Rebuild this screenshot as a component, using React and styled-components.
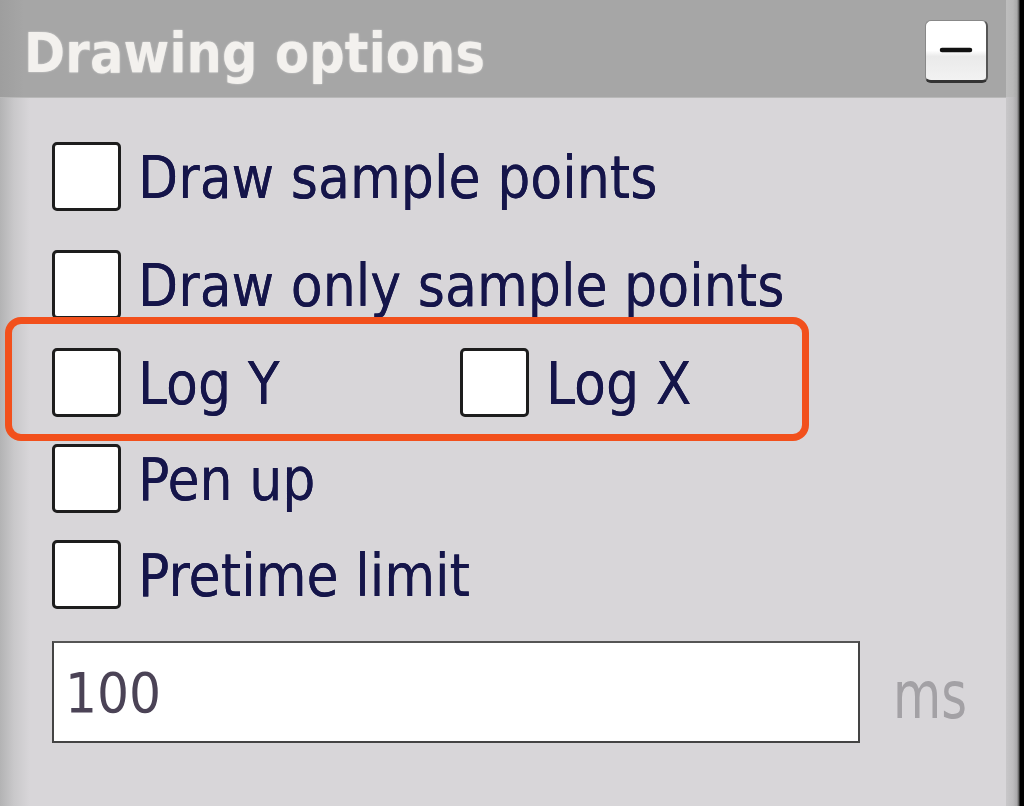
import React from "react";
import styled, { createGlobalStyle } from "styled-components";

const Global = createGlobalStyle`
  html, body { margin: 0; padding: 0; background: #d8d6d9; overflow: hidden; }
  body { font-family: "DejaVu Sans Condensed", "DejaVu Sans", sans-serif; }
`;

const Frame = styled.div`
  display: flex;
  width: 100%;
  height: 806px;
  overflow: hidden;
`;

const Panel = styled.div`
  flex: 1;
  display: flex;
  flex-direction: column;
  min-width: 0;
`;

const Edge = styled.div`
  width: 18px;
  flex-shrink: 0;
  display: flex;
  flex-direction: column;
  background: linear-gradient(90deg, #c8c7c9 0px, #bdbcbe 7px, #a9a8aa 11px, #5a5a5a 13px, #000 14px, #000 18px);
`;

const EdgeTop = styled.div`
  height: 97px;
  background: linear-gradient(90deg, #bdbdbd 0px, #b8b8b8 7px, #a9a9a9 11px, #5a5a5a 13px, #000 14px, #000 18px);
`;

const Header = styled.div`
  height: 97px;
  flex-shrink: 0;
  display: flex;
  align-items: center;
  justify-content: space-between;
  padding: 0 18px 0 24px;
  background: linear-gradient(90deg, #9e9e9e 0px, #a6a6a6 24px, #a6a6a6 100%);
  border-bottom: 1px solid #b8b8b8;
`;

const Title = styled.div`
  font-family: "DejaVu Sans Condensed", "DejaVu Sans", sans-serif;
  font-weight: bold;
  font-size: 55px;
  color: #f3f1ee;
  text-shadow: 0 0 2px rgba(255, 255, 255, 0.6);
  margin-top: 8px;
  letter-spacing: 0.2px;
`;

const MinButton = styled.div`
  width: 63px;
  height: 63px;
  box-sizing: border-box;
  border-radius: 6px;
  background: linear-gradient(180deg, #ffffff 0%, #ffffff 50%, #eaeaea 60%, #f2f2f2 100%);
  border: 1px solid #888;
  border-bottom: 3px solid #333;
  border-right: 2px solid #555;
  display: flex;
  align-items: center;
  justify-content: center;
  margin-top: 5px;
`;

const Body = styled.div`
  flex: 1;
  padding: 44px 0 0 52px;
  background: linear-gradient(90deg, #b3b3b4 0px, #c9c8ca 14px, #d8d6d9 30px, #d8d6d9 100%);
  display: flex;
  flex-direction: column;
`;

const Row = styled.div`
  position: relative;
  display: flex;
  align-items: center;
  height: 69px;
  margin-bottom: ${(p) => p.$gap}px;
`;

const Item = styled.label`
  display: flex;
  align-items: center;
  width: ${(p) => (p.$w ? `${p.$w}px` : "auto")};
`;

const Box = styled.span`
  width: 69px;
  height: 69px;
  box-sizing: border-box;
  flex-shrink: 0;
  background: #fff;
  border: 3px solid #1d1d1d;
  border-radius: 5px;
  margin-right: 17px;
`;

const Label = styled.span`
  font-size: 58px;
  color: #15154a;
  line-height: 1;
  margin-top: 2px;
  white-space: nowrap;
  text-shadow: 0 0 0.6px #15154a;
`;

const Highlight = styled.div`
  position: absolute;
  left: -47px;
  top: -31px;
  width: 804px;
  height: 124px;
  box-sizing: border-box;
  border: 7px solid #f2501c;
  border-radius: 16px;
  pointer-events: none;
`;

const InputRow = styled.div`
  display: flex;
  align-items: center;
  margin-top: 32px;
`;

const Field = styled.div`
  width: 808px;
  height: 102px;
  box-sizing: border-box;
  background: #fff;
  border: 2px solid #444;
  border-top-color: #555;
  display: flex;
  align-items: center;
  padding-left: 11px;
  font-size: 56px;
  color: #4b4356;
`;

const Unit = styled.span`
  margin-left: 33px;
  font-size: 55px;
  color: #a3a1a5;
  display: inline-block;
  transform: scaleY(1.2);
  margin-top: 6px;
`;

export default function App() {
  return (
    <>
      <Global />
      <Frame>
        <Panel>
          <Header>
            <Title>Drawing options</Title>
            <MinButton>
              <svg width="34" height="8" viewBox="0 0 34 8">
                <line x1="3" y1="4" x2="31" y2="4" stroke="#111" strokeWidth="4.5" strokeLinecap="round" />
              </svg>
            </MinButton>
          </Header>
          <Body>
            <Row $gap={39}>
              <Item><Box /><Label>Draw sample points</Label></Item>
            </Row>
            <Row $gap={29}>
              <Item><Box /><Label>Draw only sample points</Label></Item>
            </Row>
            <Row $gap={27}>
              <Item $w={408}><Box /><Label>Log Y</Label></Item>
              <Item><Box /><Label>Log X</Label></Item>
              <Highlight />
            </Row>
            <Row $gap={27}>
              <Item><Box /><Label>Pen up</Label></Item>
            </Row>
            <Row $gap={0}>
              <Item><Box /><Label>Pretime limit</Label></Item>
            </Row>
            <InputRow>
              <Field>100</Field>
              <Unit>ms</Unit>
            </InputRow>
          </Body>
        </Panel>
        <Edge>
          <EdgeTop />
        </Edge>
      </Frame>
    </>
  );
}
